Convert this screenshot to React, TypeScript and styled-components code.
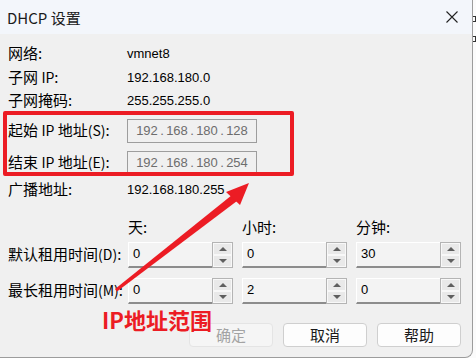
import React from 'react';
import styled, { createGlobalStyle } from 'styled-components';

const Global = createGlobalStyle`
  *, *::before, *::after { box-sizing: border-box; }
  html, body { margin: 0; padding: 0; background: #fbfbfb; }
  body { width: 476px; height: 358px; overflow: hidden; font-family: "Noto Sans CJK SC", sans-serif; }
`;

const Screen = styled.div`
  display: flex;
  width: 476px;
  height: 358px;
  background: #fbfbfb;
`;

const Window = styled.div`
  position: relative;
  width: 473px;
  height: 358px;
  flex: none;
  background: #f0f0f0;
  border-right: 1px solid #9c9c9c;
  border-bottom: 1px solid #9c9c9c;
  border-bottom-right-radius: 8px;
  display: flex;
  flex-direction: column;
  overflow: hidden;
`;

const TitleBar = styled.div`
  height: 34px;
  flex: none;
  background: #f3f6fb;
  display: flex;
  align-items: center;
  justify-content: space-between;
  padding: 0 14px 0 7px;
  font-size: 15px;
  color: #1b1b1b;
`;

const Body = styled.div`
  display: flex;
  flex-direction: column;
  padding: 8px 11px 0 8px;
`;

const InfoRow = styled.div<{ $h?: number; $mt?: number }>`
  display: grid;
  grid-template-columns: 119px 1fr;
  align-items: center;
  height: ${p => p.$h ?? 23.5}px;
  margin-top: ${p => p.$mt ?? 0}px;
`;

const Label = styled.span`
  font-family: "Noto Sans CJK SC", sans-serif;
  font-size: 15px;
  line-height: 1;
  padding-bottom: 2px;
  color: #000;
  white-space: nowrap;
`;

const Latin = styled.span`
  font-size: 14px;
`;

const Value = styled.span`
  font-family: "Liberation Sans", Arial, sans-serif;
  font-size: 13px;
  color: #000;
`;

const IPBox = styled.div`
  width: 130px;
  height: 24px;
  border: 1px solid #9d9d9d;
  background: #f0f0f0;
  display: flex;
  align-items: center;
  padding-left: 8px;
  font-family: "Liberation Sans", Arial, sans-serif;
  font-size: 13px;
  color: #6d6d6d;
`;

const Octet = styled.span`
  width: 22px;
  text-align: center;
`;

const Dot = styled.span`
  width: 8px;
  text-align: center;
`;

const IPGroup = styled.div`
  display: flex;
  flex-direction: column;
  gap: 8px;
  margin-top: 6px;
`;

const SpinGrid = styled.div<{ $h: number; $mt: number }>`
  display: grid;
  grid-template-columns: 111px repeat(3, 105px);
  column-gap: 9px;
  align-items: center;
  height: ${p => p.$h}px;
  margin-top: ${p => p.$mt}px;
`;

const Spin = styled.div`
  display: flex;
  height: 26px;
`;

const SpinField = styled.div`
  flex: 1;
  background: #f3f3f3;
  border-top: 1px solid #ffffff;
  border-left: 1px solid #ffffff;
  border-bottom: 2px solid #8c8c8c;
  font-family: "Liberation Sans", Arial, sans-serif;
  font-size: 13px;
  line-height: 15px;
  color: #000;
  padding: 3px 0 0 4px;
`;

const SpinButtons = styled.div`
  width: 21px;
  flex: none;
  border: 1px solid #b4b4b4;
  display: flex;
  flex-direction: column;
  background: #f0f0f0;
`;

const SpinBtn = styled.div`
  flex: 1;
  display: flex;
  align-items: center;
  justify-content: center;
  background: #e9e9e9;
  border: 1px solid #f8f8f8;
`;

const Tri = styled.span<{ $up?: boolean }>`
  width: 0;
  height: 0;
  border-left: 4px solid transparent;
  border-right: 4px solid transparent;
  ${p => (p.$up ? 'border-bottom: 4px solid #5f5f5f;' : 'border-top: 4px solid #5f5f5f;')}
`;

const ButtonRow = styled.div`
  display: flex;
  justify-content: flex-end;
  gap: 10px;
  margin-top: 19px;
`;

const Button = styled.div<{ $disabled?: boolean }>`
  width: 84px;
  height: 24px;
  display: flex;
  align-items: center;
  justify-content: center;
  border-radius: 4px;
  font-size: 15px;
  background: ${p => (p.$disabled ? '#f5f5f5' : '#fdfdfd')};
  border: 1px solid ${p => (p.$disabled ? '#e4e4e4' : '#cfcfcf')};
  color: ${p => (p.$disabled ? '#a3a3a3' : '#1a1a1a')};
`;

const Highlight = styled.div`
  position: absolute;
  left: 3px;
  top: 111px;
  width: 291px;
  height: 65px;
  border: 4px solid #ec1c24;
  border-radius: 2px;
  pointer-events: none;
`;

const Annotation = styled.div`
  position: absolute;
  left: 102px;
  top: 308px;
  font-family: "Noto Sans CJK SC", sans-serif;
  font-weight: 700;
  font-size: 22px;
  line-height: 1;
  color: #ec1c24;
  white-space: nowrap;
`;

const ArrowSvg = styled.svg`
  position: absolute;
  left: 0;
  top: 0;
  pointer-events: none;
`;

const EdgeStrip = styled.div`
  flex: 1;
  background: #fbfbfb;
  position: relative;
`;

const EdgeMark = styled.div<{ $top: number }>`
  position: absolute;
  left: 0;
  top: ${p => p.$top}px;
  width: 3px;
  height: 6px;
  border: 1px solid #333;
  border-left: none;
`;

const SpinBox = ({ value }: { value: string }) => (
  <Spin>
    <SpinField>{value}</SpinField>
    <SpinButtons>
      <SpinBtn><Tri $up /></SpinBtn>
      <SpinBtn><Tri /></SpinBtn>
    </SpinButtons>
  </Spin>
);

const IPField = ({ parts }: { parts: string[] }) => (
  <IPBox>
    {parts.map((p, i) => (
      <React.Fragment key={i}>
        {i > 0 && <Dot>.</Dot>}
        <Octet>{p}</Octet>
      </React.Fragment>
    ))}
  </IPBox>
);

export default function App() {
  return (
    <>
      <Global />
      <Screen>
        <Window>
          <TitleBar>
            <span>DHCP 设置</span>
            <svg width="12" height="12" viewBox="0 0 12 12">
              <path d="M0.5 0.5 L11.5 11.5 M11.5 0.5 L0.5 11.5" stroke="#222" strokeWidth="1.1" />
            </svg>
          </TitleBar>
          <Body>
            <InfoRow><Label>网络:</Label><Value>vmnet8</Value></InfoRow>
            <InfoRow><Label>子网 <Latin>IP</Latin>:</Label><Value>192.168.180.0</Value></InfoRow>
            <InfoRow><Label>子网掩码:</Label><Value>255.255.255.0</Value></InfoRow>
            <IPGroup>
              <InfoRow $h={24}>
                <Label>起始 <Latin>IP</Latin> 地址<Latin>(S)</Latin>:</Label>
                <IPField parts={['192', '168', '180', '128']} />
              </InfoRow>
              <InfoRow $h={24}>
                <Label>结束 <Latin>IP</Latin> 地址<Latin>(E)</Latin>:</Label>
                <IPField parts={['192', '168', '180', '254']} />
              </InfoRow>
            </IPGroup>
            <InfoRow $h={22} $mt={4}><Label>广播地址:</Label><Value>192.168.180.255</Value></InfoRow>
            <SpinGrid $h={22} $mt={16}>
              <span />
              <Label>天:</Label>
              <Label>小时:</Label>
              <Label>分钟:</Label>
            </SpinGrid>
            <SpinGrid $h={26} $mt={3}>
              <Label>默认租用时间<Latin>(D)</Latin>:</Label>
              <SpinBox value="0" />
              <SpinBox value="0" />
              <SpinBox value="30" />
            </SpinGrid>
            <SpinGrid $h={26} $mt={10}>
              <Label>最长租用时间<Latin>(M)</Latin>:</Label>
              <SpinBox value="0" />
              <SpinBox value="2" />
              <SpinBox value="0" />
            </SpinGrid>
            <ButtonRow>
              <Button $disabled>确定</Button>
              <Button>取消</Button>
              <Button>帮助</Button>
            </ButtonRow>
          </Body>
          <Highlight />
          <ArrowSvg width="473" height="358" viewBox="0 0 473 358">
            <polygon points="115,289 117,291.5 237,201 232,195" fill="#ec1c24" />
            <polygon points="249,183 226,192 240,205" fill="#ec1c24" />
          </ArrowSvg>
          <Annotation>IP地址范围</Annotation>
        </Window>
        <EdgeStrip>
          <EdgeMark $top={16} />
          <EdgeMark $top={36} />
        </EdgeStrip>
      </Screen>
    </>
  );
}
